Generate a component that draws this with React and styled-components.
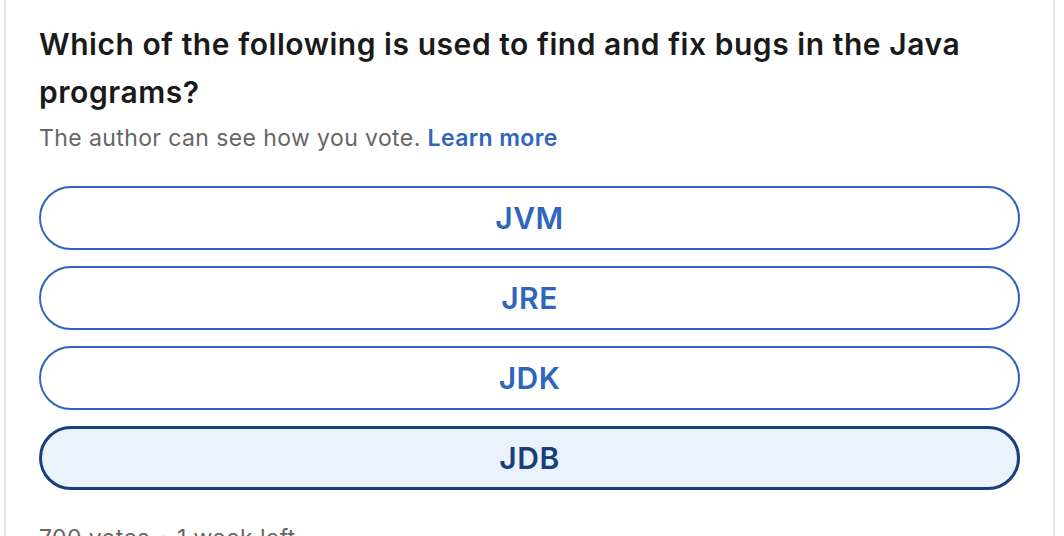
import React from 'react'
import styled, { createGlobalStyle } from 'styled-components'

const GlobalStyle = createGlobalStyle`
  html, body {
    margin: 0;
    padding: 0;
    background: #ffffff;
  }
  body {
    font-family: Inter, "Noto Sans", "Liberation Sans", sans-serif;
    -webkit-font-smoothing: antialiased;
  }
`

const Page = styled.div`
  width: 1064px;
  height: 536px;
  overflow: hidden;
  padding-left: 4px;
  box-sizing: border-box;
`

const Card = styled.div`
  width: 1051px;
  box-sizing: border-box;
  border-left: 2px solid #e8e8e8;
  border-right: 2px solid #e8e8e8;
  padding: 20px 33px 0 33px;
  display: flex;
  flex-direction: column;
`

const Question = styled.h2`
  margin: 0;
  font-size: 30px;
  line-height: 48px;
  font-weight: 600;
  color: #1a1a1a;
  letter-spacing: 0.55px;
`

const Notice = styled.p`
  margin: 7px 0 0 0;
  font-size: 23px;
  line-height: 30px;
  color: #666666;
  letter-spacing: 0.4px;
`

const LearnMore = styled.a`
  color: #2e66bd;
  font-weight: 600;
  text-decoration: none;
`

const Options = styled.div`
  display: flex;
  flex-direction: column;
  gap: 16px;
  margin-top: 33px;
`

const Option = styled.button`
  height: 64px;
  width: 100%;
  box-sizing: border-box;
  border-radius: 32px;
  border: ${p => (p.$selected ? '3px solid #173f7c' : '2px solid #2e66bd')};
  background: ${p => (p.$selected ? '#ebf2fc' : '#ffffff')};
  color: ${p => (p.$selected ? '#173f7c' : '#2e66bd')};
  font-family: inherit;
  font-size: 30px;
  font-weight: 600;
  letter-spacing: 0.5px;
  display: flex;
  align-items: center;
  justify-content: center;
  cursor: pointer;
`

const Meta = styled.div`
  margin-top: 33px;
  font-size: 23px;
  line-height: 30px;
  color: #666666;
  letter-spacing: 0.4px;
`

const options = [
  { label: 'JVM' },
  { label: 'JRE' },
  { label: 'JDK' },
  { label: 'JDB', selected: true },
]

export default function App() {
  return (
    <Page>
      <GlobalStyle />
      <Card>
        <Question>
          Which of the following is used to find and fix bugs in the Java programs?
        </Question>
        <Notice>
          The author can see how you vote. <LearnMore href="#">Learn more</LearnMore>
        </Notice>
        <Options>
          {options.map(o => (
            <Option key={o.label} $selected={o.selected}>
              {o.label}
            </Option>
          ))}
        </Options>
        <Meta>700 votes • 1 week left</Meta>
      </Card>
    </Page>
  )
}
